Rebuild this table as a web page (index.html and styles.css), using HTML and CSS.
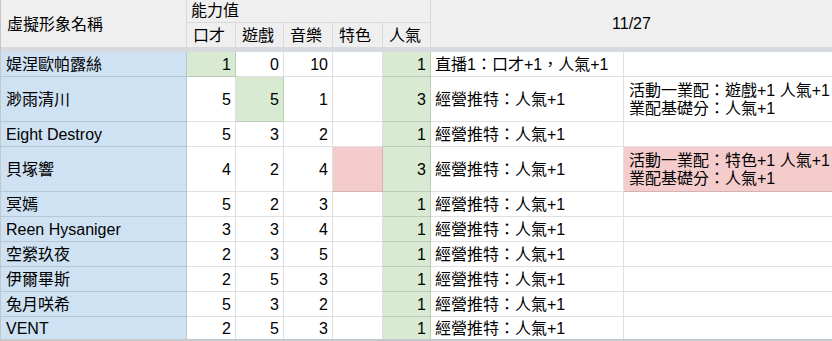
FILE: index.html
```html
<!DOCTYPE html>
<html lang="zh-Hant">
<head>
<meta charset="utf-8">
<title>虛擬形象能力值</title>
<link rel="stylesheet" href="styles.css">
</head>
<body>
<div class="sheet">
  <div class="cell head name-head">虛擬形象名稱</div>
  <div class="cell head group-head">能力值</div>
  <div class="cell head date-head">11/27</div>
  <div class="cell head sub">口才</div>
  <div class="cell head sub">遊戲</div>
  <div class="cell head sub">音樂</div>
  <div class="cell head sub">特色</div>
  <div class="cell head sub">人氣</div>
  <div class="band"></div>

  <div class="cell name">媞涅歐帕露絲</div>
  <div class="cell num green">1</div>
  <div class="cell num">0</div>
  <div class="cell num">10</div>
  <div class="cell num"></div>
  <div class="cell num green">1</div>
  <div class="cell txt">直播1：口才+1，人氣+1</div>
  <div class="cell txt last"></div>

  <div class="cell name">渺雨清川</div>
  <div class="cell num">5</div>
  <div class="cell num green">5</div>
  <div class="cell num">1</div>
  <div class="cell num"></div>
  <div class="cell num green">3</div>
  <div class="cell txt">經營推特：人氣+1</div>
  <div class="cell txt last multi"><span>活動一業配：遊戲+1 人氣+1</span><span>業配基礎分：人氣+1</span></div>

  <div class="cell name">Eight Destroy</div>
  <div class="cell num">5</div>
  <div class="cell num">3</div>
  <div class="cell num">2</div>
  <div class="cell num"></div>
  <div class="cell num green">1</div>
  <div class="cell txt">經營推特：人氣+1</div>
  <div class="cell txt last"></div>

  <div class="cell name">貝塚響</div>
  <div class="cell num">4</div>
  <div class="cell num">2</div>
  <div class="cell num">4</div>
  <div class="cell num red"></div>
  <div class="cell num green">3</div>
  <div class="cell txt">經營推特：人氣+1</div>
  <div class="cell txt last multi red"><span>活動一業配：特色+1 人氣+1</span><span>業配基礎分：人氣+1</span></div>

  <div class="cell name">冥嫣</div>
  <div class="cell num">5</div>
  <div class="cell num">2</div>
  <div class="cell num">3</div>
  <div class="cell num"></div>
  <div class="cell num green">1</div>
  <div class="cell txt">經營推特：人氣+1</div>
  <div class="cell txt last"></div>

  <div class="cell name">Reen Hysaniger</div>
  <div class="cell num">3</div>
  <div class="cell num">3</div>
  <div class="cell num">4</div>
  <div class="cell num"></div>
  <div class="cell num green">1</div>
  <div class="cell txt">經營推特：人氣+1</div>
  <div class="cell txt last"></div>

  <div class="cell name">空縈玖夜</div>
  <div class="cell num">2</div>
  <div class="cell num">3</div>
  <div class="cell num">5</div>
  <div class="cell num"></div>
  <div class="cell num green">1</div>
  <div class="cell txt">經營推特：人氣+1</div>
  <div class="cell txt last"></div>

  <div class="cell name">伊爾畢斯</div>
  <div class="cell num">2</div>
  <div class="cell num">5</div>
  <div class="cell num">3</div>
  <div class="cell num"></div>
  <div class="cell num green">1</div>
  <div class="cell txt">經營推特：人氣+1</div>
  <div class="cell txt last"></div>

  <div class="cell name">兔月咲希</div>
  <div class="cell num">5</div>
  <div class="cell num">3</div>
  <div class="cell num">2</div>
  <div class="cell num"></div>
  <div class="cell num green">1</div>
  <div class="cell txt">經營推特：人氣+1</div>
  <div class="cell txt last"></div>

  <div class="cell name">VENT</div>
  <div class="cell num">2</div>
  <div class="cell num">5</div>
  <div class="cell num">3</div>
  <div class="cell num"></div>
  <div class="cell num green">1</div>
  <div class="cell txt">經營推特：人氣+1</div>
  <div class="cell txt last"></div>
</div>
</body>
</html>
```

FILE: styles.css
```css
html, body {
  margin: 0;
  padding: 0;
  background: #ffffff;
  overflow: hidden;
}

.sheet {
  display: grid;
  width: 833px;
  grid-template-columns: 186px 49px 48px 49px 50px 48px 193px 209px;
  grid-template-rows: 23px 24px 5px 25px 45px 25px 45px 25px 25px 25px 25px 25px 22px;
  border-left: 1px solid #c4c7c9;
  border-bottom: 2px solid #c6c9cc;
  font-family: "Liberation Sans", Arial, "Noto Sans CJK TC", sans-serif;
  font-size: 16px;
  color: #000000;
}

.cell {
  box-sizing: border-box;
  display: flex;
  align-items: center;
  padding: 2px 4px 0 5px;
  border-right: 1px solid rgba(0, 0, 0, 0.12);
  border-bottom: 1px solid rgba(0, 0, 0, 0.12);
  white-space: nowrap;
  overflow: hidden;
  line-height: 18px;
}

.sheet > .cell:nth-last-child(-n+8) {
  border-bottom: none;
}

.head {
  background: #efefef;
  border-color: #d9d9d9;
}

.name-head {
  grid-column: 1;
  grid-row: 1 / 3;
  border-bottom: none;
  padding-left: 6px;
}

.group-head {
  grid-column: 2 / 7;
  grid-row: 1;
  padding-left: 4px;
  padding-top: 0;
}

.date-head {
  grid-column: 7 / 9;
  grid-row: 1 / 3;
  justify-content: center;
  border-bottom: none;
  padding: 0;
}

.sub {
  grid-row: 2;
  border-bottom: none;
  padding-left: 6px;
}

.band {
  grid-column: 1 / -1;
  grid-row: 3;
  background: #d6d9de;
}

.name {
  background: #cfe2f3;
  padding-left: 5px;
}

.num {
  justify-content: flex-end;
  padding-right: 4px;
}

.txt {
  padding-left: 4px;
}

.last {
  padding-left: 5px;
}

.multi {
  flex-direction: column;
  align-items: flex-start;
  justify-content: center;
}

.green {
  background: #d9ead3;
}

.red {
  background: #f4cccc;
}
```
